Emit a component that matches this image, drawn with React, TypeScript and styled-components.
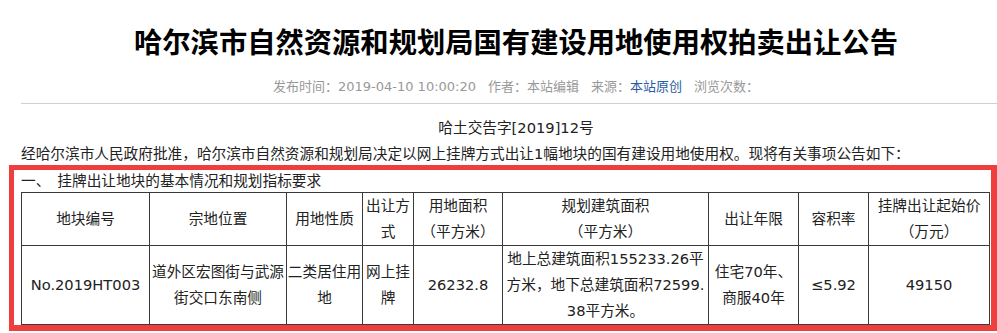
import { FunctionComponent } from "react";
import styled, { createGlobalStyle } from "styled-components";

const GlobalStyle = createGlobalStyle`
  html, body {
    margin: 0;
    padding: 0;
    background: #fff;
    overflow: hidden;
  }
  body {
    font-family: "DejaVu Sans", "Noto Sans CJK SC", sans-serif;
    color: #222;
  }
`;

const headers = [
  ["地块编号"],
  ["宗地位置"],
  ["用地性质"],
  ["出让方", "式"],
  ["用地面积", "（平方米）"],
  ["规划建筑面积", "（平方米）"],
  ["出让年限"],
  ["容积率"],
  ["挂牌出让起始价", "（万元）"],
];

const row = [
  ["No.2019HT003"],
  ["道外区宏图街与武源", "街交口东南侧"],
  ["二类居住用", "地"],
  ["网上挂", "牌"],
  ["26232.8"],
  ["地上总建筑面积155233.26平", "方米，地下总建筑面积72599.", "38平方米。"],
  ["住宅70年、", "商服40年"],
  ["≤5.92"],
  ["49150"],
];

const colWidths = [128, 137, 76, 51, 89, 206, 90, 70, 121];

const Lines: FunctionComponent<{ lines: string[] }> = ({ lines }) => (
  <>
    {lines.map((l, i) => (
      <span key={i}>
        {i > 0 && <br />}
        {l}
      </span>
    ))}
  </>
);

const App: FunctionComponent = () => {
  return (
    <>
      <GlobalStyle />
      <PageStyles>
        <header className="article-head">
          <h1 className="title">哈尔滨市自然资源和规划局国有建设用地使用权拍卖出让公告</h1>
          <div className="meta">
            <span className="item">发布时间：2019-04-10 10:00:20</span>
            <span className="item">作者：本站编辑</span>
            <span className="item">
              来源：<a className="source">本站原创</a>
            </span>
            <span className="item">浏览次数：</span>
          </div>
        </header>
        <div className="article-body">
          <p className="doc-number">哈土交告字[2019]12号</p>
          <p className="intro">
            经哈尔滨市人民政府批准，哈尔滨市自然资源和规划局决定以网上挂牌方式出让1幅地块的国有建设用地使用权。现将有关事项公告如下：
          </p>
        </div>
        <HighlightBox>
          <p className="section-title">
            一、<span className="gap" />挂牌出让地块的基本情况和规划指标要求
          </p>
          <LandTable>
            <colgroup>
              {colWidths.map((w, i) => (
                <col key={i} style={{ width: w }} />
              ))}
            </colgroup>
            <tbody>
              <tr>
                {headers.map((h, i) => (
                  <td key={i}>
                    <Lines lines={h} />
                  </td>
                ))}
              </tr>
              <tr>
                {row.map((c, i) => (
                  <td key={i}>
                    <Lines lines={c} />
                  </td>
                ))}
              </tr>
            </tbody>
          </LandTable>
        </HighlightBox>
      </PageStyles>
    </>
  );
};

const PageStyles = styled.div`
  width: 1011px;
  padding-top: 21px;

  .article-head {
    margin-left: 21px;
    border-bottom: 1px solid #cfcfcf;
    padding-bottom: 6px;
  }

  .title {
    margin: 0;
    height: 40px;
    line-height: 40px;
    text-align: center;
    font-family: "Noto Sans CJK SC", sans-serif;
    font-size: 28.3px;
    font-weight: 700;
    color: #000;
    white-space: nowrap;
  }

  .meta {
    margin-top: 16px;
    height: 20px;
    line-height: 20px;
    text-align: center;
    font-size: 13px;
    color: #999;
    white-space: nowrap;

    .item {
      margin: 0 6px;
    }

    .source {
      color: #2a5ca6;
      cursor: pointer;
    }
  }

  .article-body {
    margin-left: 21px;
    font-size: 14.67px;
    color: #222;

    p {
      margin: 0;
    }

    .doc-number {
      margin-top: 12px;
      line-height: 24px;
      text-align: center;
    }

    .intro {
      margin-top: 3px;
      line-height: 22px;
      white-space: nowrap;
    }
  }
`;

const HighlightBox = styled.section`
  margin-left: 9px;
  width: 976px;
  border-style: solid;
  border-color: #ef3e3e;
  border-width: 5px 6px 6px 5px;
  padding-left: 7px;
  box-sizing: border-box;
  width: 988px;

  .section-title {
    margin: 0;
    line-height: 22px;
    font-size: 14.67px;
    color: #222;
    white-space: nowrap;

    .gap {
      display: inline-block;
      width: 7px;
    }
  }
`;

const LandTable = styled.table`
  width: 968px;
  table-layout: fixed;
  border-collapse: collapse;
  border: 1px solid #3a3a3a;
  font-size: 14.67px;
  color: #222;

  td {
    border: 1px solid #3a3a3a;
    padding: 0;
    line-height: 26px;
    text-align: center;
    vertical-align: middle;
    white-space: nowrap;
    overflow: hidden;
  }
`;

export default App;
